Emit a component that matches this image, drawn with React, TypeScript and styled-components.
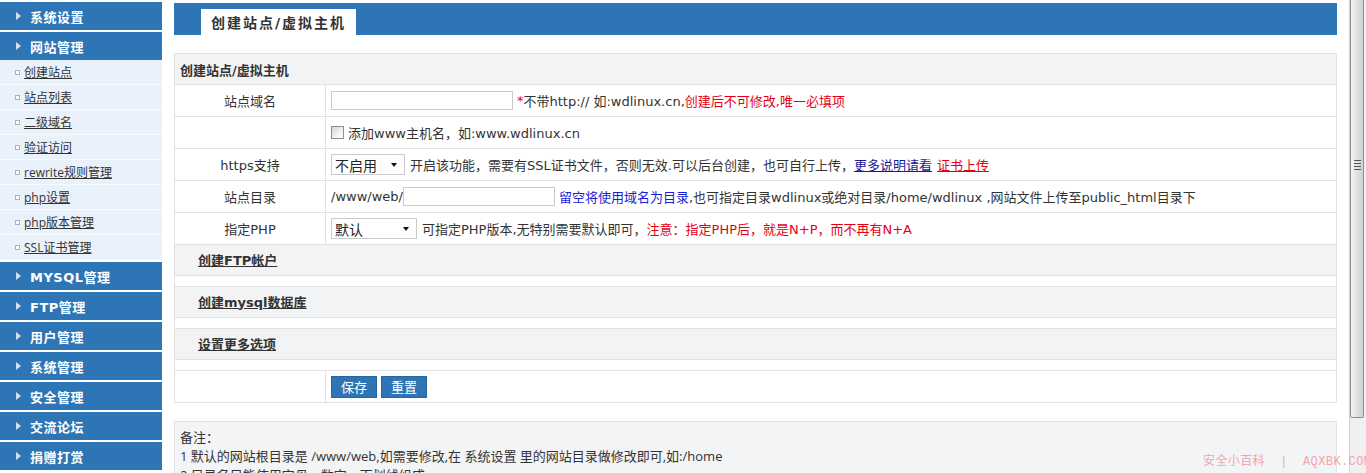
import React from 'react';
import styled, { createGlobalStyle } from 'styled-components';

const GlobalStyle = createGlobalStyle`
  html, body {
    margin: 0;
    padding: 0;
    background: #fff;
  }
  body {
    font-family: "DejaVu Sans", "Noto Sans CJK SC", sans-serif;
    font-size: 13px;
    color: #333;
    overflow: hidden;
  }
`;

const BLUE = '#2e75b6';
const LINE = '#e2e2e2';

const Page = styled.div`
  position: relative;
  display: grid;
  grid-template-columns: 162px 1fr 17px;
  height: 473px;
  overflow: hidden;
`;

/* ---------- sidebar ---------- */

const Sidebar = styled.nav`
  display: flex;
  flex-direction: column;
  padding-top: 2px;
`;

const MenuHead = styled.div<{ $open?: boolean }>`
  height: 28px;
  margin-bottom: ${p => (p.$open ? '0' : '2px')};
  padding-left: 16px;
  display: flex;
  align-items: center;
  background: ${BLUE};
  color: #fff;
  font-weight: bold;
  font-size: 13px;
  letter-spacing: 0.5px;
  flex-shrink: 0;
`;

const Arrow = styled.span`
  width: 0;
  height: 0;
  border-left: 5px solid #cfe0f2;
  border-top: 4px solid transparent;
  border-bottom: 4px solid transparent;
  margin-right: 9px;
`;

const SubList = styled.ul`
  list-style: none;
  margin: 0 0 2px;
  padding: 0;
`;

const SubItem = styled.li`
  box-sizing: border-box;
  height: 25px;
  padding-left: 15px;
  display: flex;
  align-items: center;
  background: #e9f1fa;
  border-bottom: 1px solid #f7fafd;
`;

const Bullet = styled.span`
  box-sizing: border-box;
  width: 5px;
  height: 5px;
  border: 1px solid #a8b2bd;
  background: #fff;
  margin-right: 4px;
`;

const SubLink = styled.a`
  font-family: "Open Sans", "Noto Sans CJK SC", sans-serif;
  font-size: 12px;
  color: #333;
  text-decoration: underline;
`;

/* ---------- main ---------- */

const Main = styled.main`
  min-width: 0;
  padding: 3px 12px 0;
`;

const TopBar = styled.div`
  height: 32px;
  padding-left: 27px;
  display: flex;
  align-items: flex-end;
  background: ${BLUE};
`;

const Tab = styled.div`
  height: 26px;
  width: 155px;
  box-sizing: border-box;
  padding-left: 10px;
  display: flex;
  align-items: center;
  background: #fff;
  color: #333;
  font-weight: bold;
  font-size: 14px;
  letter-spacing: 2px;
`;

const FormTable = styled.table`
  width: 100%;
  margin-top: 18px;
  border-collapse: collapse;
  border: 1px solid ${LINE};
`;

const Row = styled.tr<{ $gray?: boolean }>`
  background: ${p => (p.$gray ? '#f2f3f5' : '#fff')};
  td {
    border-bottom: 1px solid ${LINE};
  }
`;

const TitleCell = styled.td`
  height: 30px;
  padding: 0 5px;
  font-weight: bold;
  font-size: 13px;
`;

const SectionCell = styled.td`
  height: 28px;
  padding: 0 0 2px 23px;
  font-weight: bold;
  font-size: 13px;
  a {
    color: #333;
    text-decoration: underline;
  }
`;

const SpacerCell = styled.td`
  height: 10px;
  padding: 0;
`;

const Label = styled.td`
  width: 150px;
  height: 31px;
  padding: 0;
  text-align: center;
  border-right: 1px solid ${LINE};
`;

const Cell = styled.td`
  padding: 0 5px;
`;

const Line = styled.div`
  display: flex;
  align-items: center;
  white-space: nowrap;
`;

const Red = styled.span`
  color: #e60012;
`;

const Blue = styled.span`
  color: #1c1cd8;
`;

const TextLink = styled.a<{ $red?: boolean }>`
  color: ${p => (p.$red ? '#e60012' : '#1a1a96')};
  text-decoration: underline;
  margin-right: 5px;
`;

const TextInput = styled.input<{ $w: number }>`
  box-sizing: border-box;
  width: ${p => p.$w}px;
  height: 19px;
  margin: 0 4px 0 0;
  padding: 0 3px;
  border: 1px solid #c9c9c9;
  background: #fff;
  font-size: 12px;
  outline: none;
`;

const CheckBox = styled.input`
  appearance: none;
  box-sizing: border-box;
  width: 13px;
  height: 13px;
  margin: 0 4px 0 0;
  border: 1px solid #8e8f8f;
  background: linear-gradient(135deg, #d6d6d6, #f6f6f6 70%, #fff);
`;

const Select = styled.div<{ $w: number }>`
  position: relative;
  box-sizing: border-box;
  width: ${p => p.$w}px;
  height: 21px;
  margin-right: 5px;
  padding-left: 3px;
  display: flex;
  align-items: center;
  border: 1px solid #cacaca;
  background: #fff;
  font-family: "Noto Sans CJK SC", sans-serif;
  font-size: 14px;
  color: #222;
  &::after {
    content: '';
    position: absolute;
    right: 7px;
    top: 8px;
    border-top: 4px solid #111;
    border-left: 3.5px solid transparent;
    border-right: 3.5px solid transparent;
  }
`;

const Button = styled.button`
  width: 46px;
  height: 22px;
  margin-right: 4px;
  padding: 0;
  border: 1px solid #27659e;
  background: ${BLUE};
  color: #fff;
  font-family: "Noto Sans CJK SC", sans-serif;
  font-size: 13px;
`;

const Notes = styled.div`
  margin-top: 18px;
  padding: 6px 5px;
  border: 1px solid #e3e3e3;
  background: #f3f4f5;
  font-family: "Open Sans", "Noto Sans CJK SC", sans-serif;
  font-size: 13px;
  line-height: 19px;
  color: #333;
`;

/* ---------- scrollbar + watermark ---------- */

const ScrollTrack = styled.div`
  background: #f0f0f0;
  border-left: 1px solid #d4d4d4;
`;

const Thumb = styled.div`
  box-sizing: border-box;
  width: 14px;
  height: 418px;
  padding-top: 160px;
  display: flex;
  flex-direction: column;
  align-items: center;
  gap: 2px;
  border: 1px solid #8f8f8f;
  border-top: none;
  border-radius: 0 0 2px 2px;
  background: linear-gradient(to right, #f4f4f4, #dedede 60%, #cfcfcf);
`;

const Grip = styled.span`
  width: 7px;
  height: 1px;
  background: #555;
`;

const Watermark = styled.div`
  position: absolute;
  left: 1203px;
  top: 455px;
  z-index: 2;
  color: #f2a5ae;
  font-family: "Liberation Mono", "Noto Sans CJK SC", monospace;
  font-size: 12px;
  line-height: 15px;
  letter-spacing: 0.4px;
  white-space: pre;
`;

const menuTop = ['系统设置'];
const subMenu = ['创建站点', '站点列表', '二级域名', '验证访问', 'rewrite规则管理', 'php设置', 'php版本管理', 'SSL证书管理'];
const menuRest = ['MYSQL管理', 'FTP管理', '用户管理', '系统管理', '安全管理', '交流论坛', '捐赠打赏'];
const sections = ['创建FTP帐户', '创建mysql数据库', '设置更多选项'];

export default function App() {
  return (
    <Page>
      <GlobalStyle />
      <Sidebar>
        {menuTop.map(m => (
          <MenuHead key={m}><Arrow />{m}</MenuHead>
        ))}
        <MenuHead $open><Arrow />网站管理</MenuHead>
        <SubList>
          {subMenu.map(s => (
            <SubItem key={s}><Bullet /><SubLink href="#">{s}</SubLink></SubItem>
          ))}
        </SubList>
        {menuRest.map(m => (
          <MenuHead key={m}><Arrow />{m}</MenuHead>
        ))}
      </Sidebar>

      <Main>
        <TopBar>
          <Tab>创建站点/虚拟主机</Tab>
        </TopBar>

        <FormTable>
          <tbody>
            <Row $gray>
              <TitleCell colSpan={2}>创建站点/虚拟主机</TitleCell>
            </Row>
            <Row>
              <Label>站点域名</Label>
              <Cell>
                <Line>
                  <TextInput $w={182} />
                  <Red>*</Red>不带http:// 如:wdlinux.cn,<Red>创建后不可修改,唯一必填项</Red>
                </Line>
              </Cell>
            </Row>
            <Row>
              <Label />
              <Cell>
                <Line>
                  <CheckBox type="checkbox" />添加www主机名，如:www.wdlinux.cn
                </Line>
              </Cell>
            </Row>
            <Row>
              <Label>https支持</Label>
              <Cell>
                <Line>
                  <Select $w={74}>不启用</Select>
                  开启该功能，需要有SSL证书文件，否则无效.可以后台创建，也可自行上传，
                  <TextLink href="#">更多说明请看</TextLink>
                  <TextLink href="#" $red>证书上传</TextLink>
                </Line>
              </Cell>
            </Row>
            <Row>
              <Label>站点目录</Label>
              <Cell>
                <Line>
                  /www/web/<TextInput $w={152} />
                  <Blue>留空将使用域名为目录</Blue>,也可指定目录wdlinux或绝对目录/home/wdlinux ,网站文件上传至public_html目录下
                </Line>
              </Cell>
            </Row>
            <Row>
              <Label>指定PHP</Label>
              <Cell>
                <Line>
                  <Select $w={86}>默认</Select>
                  可指定PHP版本,无特别需要默认即可，<Red>注意：指定PHP后，就是N+P，而不再有N+A</Red>
                </Line>
              </Cell>
            </Row>
            {sections.map(s => (
              <React.Fragment key={s}>
                <Row $gray>
                  <SectionCell colSpan={2}><a href="#">{s}</a></SectionCell>
                </Row>
                <Row>
                  <SpacerCell colSpan={2} />
                </Row>
              </React.Fragment>
            ))}
            <Row>
              <Label />
              <Cell>
                <Line>
                  <Button>保存</Button>
                  <Button>重置</Button>
                </Line>
              </Cell>
            </Row>
          </tbody>
        </FormTable>

        <Notes>
          <div>备注：</div>
          <div>1 默认的网站根目录是 /www/web,如需要修改,在 系统设置 里的网站目录做修改即可,如:/home</div>
          <div>2 目录名只能使用字母、数字、下划线组成</div>
        </Notes>
      </Main>

      <ScrollTrack>
        <Thumb>
          <Grip />
          <Grip />
          <Grip />
          <Grip />
        </Thumb>
      </ScrollTrack>

      <Watermark>{'安全小百科  |  AQXBK.COM'}</Watermark>
    </Page>
  );
}
